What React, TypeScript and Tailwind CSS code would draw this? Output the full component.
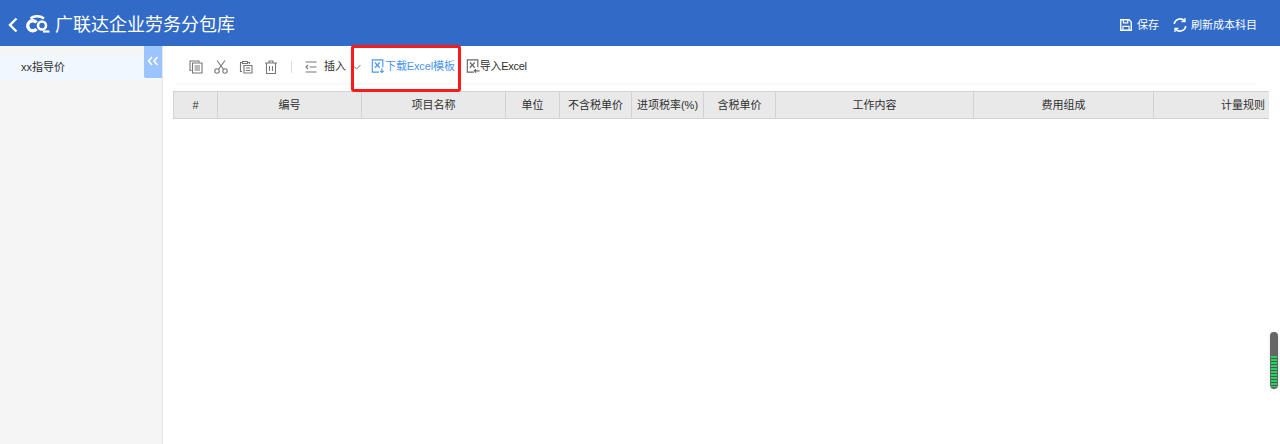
import React from "react";

const font = { fontFamily: '"Liberation Sans","Noto Sans CJK SC",sans-serif' };

function Stroke({ children, size = 16, className = "" }: { children: React.ReactNode; size?: number; className?: string }) {
  return (
    <svg width={size} height={size} viewBox="0 0 16 16" fill="none" stroke="currentColor" strokeWidth="1.1" className={`shrink-0 ${className}`}>
      {children}
    </svg>
  );
}

const ExcelIcon = ({ down }: { down: boolean }) => (
  <Stroke size={14} className="-mt-[1px]">
    <path d="M9 15H1.500V1h12v8.500" strokeWidth="1.300" />
    <path d="M4.500 4l5.500 6M10 4l-5.500 6" strokeWidth="1.300" />
    {down ? <path d="M12.500 10.500v5M10.500 13.500l2 2 2-2" strokeWidth="1.300" /> : <path d="M15.500 13.500H9.500M11.500 11.500l-2 2 2 2" strokeWidth="1.300" />}
  </Stroke>
);

const columns: [string, string, string][] = [
  ["#", "w-[45px]", "justify-center"],
  ["编号", "w-[144px]", "justify-center"],
  ["项目名称", "w-[144px]", "justify-center"],
  ["单位", "w-[54px]", "justify-center"],
  ["不含税单价", "w-[72px]", "justify-center"],
  ["进项税率(%)", "w-[72px]", "justify-center"],
  ["含税单价", "w-[72px]", "justify-center"],
  ["工作内容", "w-[198px]", "justify-center"],
  ["费用组成", "w-[180px]", "justify-center"],
  ["计量规则", "w-[115px]", "justify-end pr-[4px]"],
];

export default function App() {
  return (
    <div className="relative flex h-[444px] w-[1280px] flex-col overflow-hidden bg-white text-[11px] text-[#2f2f2f]" style={font}>
      <header className="flex h-[46px] shrink-0 items-center justify-between bg-[#316ac7] pt-[4px] text-white">
        <div className="flex items-center">
          <svg width="12" height="18" viewBox="0 0 12 18" fill="none" stroke="white" strokeWidth="2.4" className="ml-[7px]">
            <path d="M9.5 2.5L3 9l6.500 6.500" />
          </svg>
          <svg width="26" height="20" viewBox="0 0 26 20" fill="none" stroke="white" className="ml-[6px]">
            <path d="M11.500 7.500A5 5 0 1 0 11.500 14" strokeWidth="3.400" />
            <circle cx="17" cy="10.500" r="4" strokeWidth="2.600" />
            <path d="M5.500 3.500C9 .500 15 .500 19 3.500" strokeWidth="2.600" />
            <path d="M18 16.500h6.500" strokeWidth="2.200" />
          </svg>
          <span className="ml-[4px] text-[18px] leading-none">广联达企业劳务分包库</span>
        </div>
        <div className="mr-[23px] flex items-center">
          <Stroke size={14} className="mr-[4px]">
            <path d="M2 2h9.500L14 4.500V14H2z" strokeWidth="1.500" />
            <path d="M5 2v3.500h5V2M4.500 14V9.500h7V14" strokeWidth="1.300" />
          </Stroke>
          <span>保存</span>
          <Stroke size={16} className="ml-[13px] mr-[3px]">
            <path d="M2.200 7A6 6 0 0 1 12.500 3.800M13.800 9A6 6 0 0 1 3.500 12.200" strokeWidth="1.600" />
            <path d="M13 1v3.500H9.500M3 15v-3.500h3.500" strokeWidth="1.300" />
          </Stroke>
          <span>刷新成本科目</span>
        </div>
      </header>

      <div className="flex min-h-0 flex-1">
        <aside className="relative w-[163px] shrink-0 border-r border-[#e6e6e6] bg-[#f5f5f5] pt-[8px]">
          <div className="flex h-[26px] items-center bg-[#f0f7ff] pl-[21px]">xx指导价</div>
          <div className="absolute right-0 top-0 flex h-[32px] w-[18px] items-center justify-center rounded-bl-[2px] bg-[#9cc5ff] pb-[2px] text-white">
            <svg width="12" height="10" viewBox="0 0 12 10" fill="none" stroke="white" strokeWidth="1.500">
              <path d="M5 1L1.500 5 5 9M10.500 1L7 5l3.500 4" />
            </svg>
          </div>
        </aside>

        <main className="min-w-0 flex-1 pl-[10px]">
          <div className="flex h-[37px] w-[1085px] items-center pl-[15px] pt-[4px] text-[#777] shadow-[0_3px_3px_-2px_rgba(0,0,0,0.05)]">
            <Stroke>
              <path d="M3.500 11.500H2V2h9v1.500" />
              <path d="M4.500 4h9.500v10H4.500z" />
              <path d="M6.500 7h5.500M6.500 9h5.500M6.500 11h5.500" />
            </Stroke>
            <Stroke className="ml-[9px]">
              <path d="M4 1.500l6.300 8.500M12 1.500L5.700 10" />
              <circle cx="4" cy="12" r="2.200" />
              <circle cx="12" cy="12" r="2.200" />
            </Stroke>
            <Stroke className="ml-[9px]">
              <path d="M4 12.500H2.500V3.500H4M10 3.500h1.500V5" />
              <path d="M4.500 2.500h5v2h-5z" />
              <path d="M6 6.500h8V14H6zM8 9h4M8 11.500h4" />
            </Stroke>
            <Stroke className="ml-[9px]">
              <path d="M2 4h12M6 4V2h4v2M3.500 4v10.500h9V4" />
              <path d="M6.500 7v5M9.500 7v5" />
            </Stroke>
            <div className="ml-[12px] h-[12px] w-px bg-[#ddd]" />
            <Stroke className="ml-[11px]">
              <path d="M2.500 3h11M6.500 8h7M2.500 13h11" />
              <path d="M5 6L3 8l2 2" />
            </Stroke>
            <span className="ml-[5px] text-[#2f2f2f]">插入</span>
            <svg width="9" height="6" viewBox="0 0 9 6" fill="none" stroke="#777" className="ml-[6px]">
              <path d="M.500 1l4 4 4-4" />
            </svg>
            <div className="ml-[10px] flex items-center text-[#4a96f5]">
              <ExcelIcon down />
              <span className="tracking-[-0.12px]">下载Excel模板</span>
            </div>
            <div className="ml-[11px] flex items-center text-[#666]">
              <ExcelIcon down={false} />
              <span className="tracking-[-0.3px] text-[#2f2f2f]">导入Excel</span>
            </div>
          </div>

          <div className="mt-[8px] flex h-[28px] w-[1096px]">
            {columns.map(([label, width, align], i) => (
              <div
                key={label}
                className={`flex h-full items-center border-y border-r border-[#d2d2d2] bg-[#e9e9e9] ${i === 0 ? "border-l" : ""} ${i === columns.length - 1 ? "border-r-0" : ""} ${width} ${align}`}
              >
                {label}
              </div>
            ))}
          </div>
        </main>
      </div>

      <div className="absolute left-[351px] top-[45px] h-[47px] w-[110px] rounded-[3px] border-[3px] border-[#fb1a1a]" />

      <div className="absolute left-[1270px] top-[332px] flex h-[57px] w-[8px] flex-col justify-end rounded-full bg-[#666] px-px pb-[2px] shadow-[0_0_3px_rgba(0,0,0,0.12)]">
        <div className="h-[31px] bg-[repeating-linear-gradient(to_bottom,#1fd65f_0,#1fd65f_2px,#555_2px,#555_3px)]" />
      </div>
    </div>
  );
}
